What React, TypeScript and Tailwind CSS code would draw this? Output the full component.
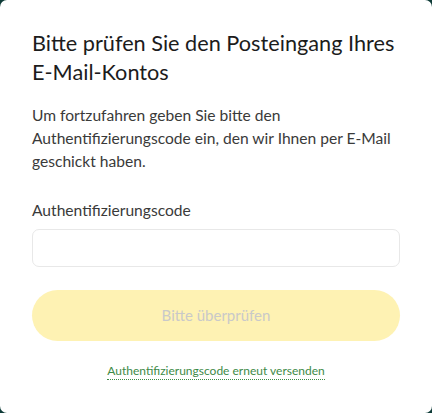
import React from "react";

export default function App() {
  return (
    <div className="w-[432px] h-[413px] bg-[#0e3b37]" style={{ fontFamily: "Lato, 'Noto Sans', sans-serif" }}>
      <div className="w-full h-full bg-white rounded-[7px] px-[32px] pt-[29px] flex flex-col">
        <h1 className="text-[21.7px] leading-[29px] text-[#1c1c1c] font-normal">
          Bitte prüfen Sie den Posteingang Ihres E-Mail-Kontos
        </h1>
        <p className="mt-[17px] text-[15.6px] leading-[23px] text-[#3a3a3a]">
          Um fortzufahren geben Sie bitte den Authentifizierungscode ein, den wir Ihnen per E-Mail geschickt haben.
        </p>
        <label className="mt-[27px] text-[15.6px] leading-[20px] text-[#3a3a3a]">Authentifizierungscode</label>
        <input className="mt-[9px] h-[38px] w-full rounded-[7px] border border-[#e8e8e8] outline-none px-3" />
        <button className="mt-[23px] h-[51px] w-full rounded-full bg-[#fef2b3] text-[15px] text-[#c9c9c9]">
          Bitte überprüfen
        </button>
        <div className="mt-[22px] flex justify-center">
          <a className="text-[12px] leading-[16px] text-[#3d8a47] border-b border-dotted border-[#3d8a47]">
            Authentifizierungscode erneut versenden
          </a>
        </div>
      </div>
    </div>
  );
}
